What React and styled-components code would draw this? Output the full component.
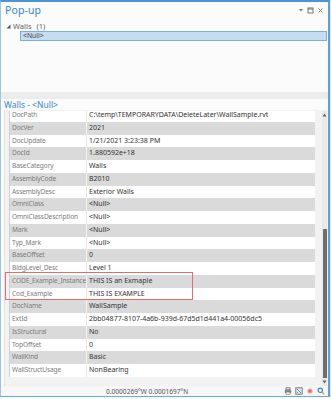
import React from "react";
import styled, { createGlobalStyle } from "styled-components";

const Global = createGlobalStyle`
  html, body { margin: 0; padding: 0; background: #fdfdfd; }
  body { font-family: "Noto Sans", "Open Sans", sans-serif; }
  * { box-sizing: border-box; }
`;

const Frame = styled.div`
  width: 331px;
  height: 399px;
  display: flex;
  align-items: flex-start;
  background: #fdfdfd;
  overflow: hidden;
`;

const Window = styled.div`
  width: 330px;
  height: 397px;
  display: flex;
  flex-direction: column;
  background: #fbfbfb;
  border-top: 2px solid #4a94d6;
  border-left: 1px solid #9cc4e8;
  border-right: 2px solid #5ca0dc;
  border-bottom: 1px solid #6aa8de;
`;

const SideStrip = styled.div`
  width: 1px;
  height: 397px;
  background: #e4e4e4;
`;

const TitleBar = styled.div`
  height: 16px;
  display: flex;
  align-items: center;
  justify-content: space-between;
  padding: 0 4px 0 4px;
`;

const Title = styled.div`
  font-size: 10.5px;
  line-height: 14px;
  color: #2f8ad0;
  letter-spacing: 0.1px;
`;

const WinIcons = styled.div`
  display: flex;
  gap: 3px;
  align-items: center;
  color: #777;
  font-size: 7px;
`;

const TreePanel = styled.div`
  height: 74px;
  padding: 3px 1px 0 5px;
  display: flex;
  flex-direction: column;
`;

const TreeRow = styled.div`
  height: 10px;
  display: flex;
  align-items: center;
  gap: 2px;
  font-size: 7.5px;
  color: #666;
`;

const Count = styled.span`
  margin-left: 3px;
`;

const SelectedRow = styled.div`
  margin-left: 14px;
  height: 10px;
  background: #c6ddf1;
  border: 1px solid #79b0e2;
  font-size: 6.8px;
  line-height: 8px;
  color: #444;
  padding-left: 2px;
`;

const Splitter = styled.div`
  height: 7px;
  background: #ececec;
`;

const FeatureHeader = styled.div`
  height: 11px;
  padding-left: 3px;
  font-size: 8.5px;
  line-height: 11px;
  color: #2f8ad0;
  background: #fbfbfb;
`;

const TableArea = styled.div`
  position: relative;
  flex: 1;
  display: flex;
  margin-left: 3px;
  padding: 1px 1px 0 4px;
  background: #f2f2f2;
  border-left: 1px solid #e2e2e2;
`;

const TableViewport = styled.div`
  width: 308px;
  height: 265.5px;
  overflow: hidden;
  border-left: 1px solid #cfcfcf;
`;

const Table = styled.div`
  margin-top: -2px;
  display: flex;
  flex-direction: column;
`;

const Row = styled.div`
  height: 12.75px;
  display: grid;
  grid-template-columns: 76px 1fr;
  background: ${(p) => (p.$alt ? "#dadada" : "#ffffff")};
  font-size: 7px;
  line-height: 12.75px;
  white-space: nowrap;
`;

const NameCell = styled.div`
  padding-left: 2px;
  color: #7b7b7b;
  font-size: 6.6px;
  letter-spacing: -0.12px;
`;

const ValueCell = styled.div`
  padding-left: 2px;
  color: #333;
  border-left: 1px solid ${(p) => (p.$alt ? "#f4f4f4" : "#e6e6e6")};
  overflow: hidden;
`;

const Scrollbar = styled.div`
  margin-left: 7px;
  width: 5px;
  height: 275px;
  background: #e9e9e9;
  display: flex;
  flex-direction: column;
  align-items: center;
`;

const Arrow = styled.div`
  height: 8px;
  display: flex;
  align-items: center;
  justify-content: center;
`;

const TrackSpace = styled.div`
  height: ${(p) => p.$h}px;
`;

const Thumb = styled.div`
  width: 4px;
  height: ${(p) => p.$h}px;
  background: #6e6e6e;
`;

const Highlight = styled.div`
  position: absolute;
  left: 0px;
  top: 162px;
  width: 188px;
  height: 28px;
  border: 1.3px solid #e36d6d;
  pointer-events: none;
`;

const StatusBar = styled.div`
  height: 10px;
  display: flex;
  align-items: center;
  padding-left: 105px;
  padding-right: 3px;
  background: #f7f7f7;
  font-size: 6.6px;
  color: #555;
`;

const Coords = styled.div`
  flex: 1;
`;

const StatusIcons = styled.div`
  display: flex;
  gap: 3px;
  align-items: center;
`;

const rows = [
  ["DocPath", "C:\\temp\\TEMPORARYDATA\\DeleteLater\\WallSample.rvt"],
  ["DocVer", "2021"],
  ["DocUpdate", "1/21/2021 3:23:38 PM"],
  ["DocId", "1.880592e+18"],
  ["BaseCategory", "Walls"],
  ["AssemblyCode", "B2010"],
  ["AssemblyDesc", "Exterior Walls"],
  ["OmniClass", "<Null>"],
  ["OmniClassDescription", "<Null>"],
  ["Mark", "<Null>"],
  ["Typ_Mark", "<Null>"],
  ["BaseOffset", "0"],
  ["BldgLevel_Desc", "Level 1"],
  ["CODE_Example_Instance", "THIS IS an Exmaple"],
  ["Cod_Example", "THIS IS EXAMPLE"],
  ["DocName", "WallSample"],
  ["ExtId", "2bb04877-8107-4a6b-939d-67d5d1d441a4-00056dc5"],
  ["IsStructural", "No"],
  ["TopOffset", "0"],
  ["WallKind", "Basic"],
  ["WallStructUsage", "NonBearing"],
];

export default function App() {
  return (
    <>
      <Global />
      <Frame>
        <Window>
          <TitleBar>
            <Title>Pop-up</Title>
            <WinIcons>
              <svg width="6" height="6" viewBox="0 0 6 6">
                <path d="M1 2 L5 2 L3 4.5 Z" fill="#777" />
              </svg>
              <svg width="7" height="7" viewBox="0 0 7 7">
                <rect x="1" y="1" width="5" height="5" fill="none" stroke="#777" strokeWidth="1" />
                <line x1="1" y1="2" x2="6" y2="2" stroke="#777" strokeWidth="1" />
              </svg>
              <svg width="7" height="7" viewBox="0 0 7 7">
                <path d="M1.5 1.5 L5.5 5.5 M5.5 1.5 L1.5 5.5" stroke="#777" strokeWidth="1" />
              </svg>
            </WinIcons>
          </TitleBar>
          <TreePanel>
            <TreeRow>
              <svg width="5" height="5" viewBox="0 0 5 5">
                <path d="M4.5 0.5 L4.5 4.5 L0.5 4.5 Z" fill="#555" />
              </svg>
              <span>Walls</span>
              <Count>(1)</Count>
            </TreeRow>
            <SelectedRow>&lt;Null&gt;</SelectedRow>
          </TreePanel>
          <Splitter />
          <FeatureHeader>Walls - &lt;Null&gt;</FeatureHeader>
          <TableArea>
            <TableViewport>
              <Table>
                {rows.map(([k, v], i) => (
                  <Row key={k} $alt={i % 2 === 1}>
                    <NameCell>{k}</NameCell>
                    <ValueCell $alt={i % 2 === 1}>{v}</ValueCell>
                  </Row>
                ))}
              </Table>
            </TableViewport>
            <Scrollbar>
              <Arrow>
                <svg width="5" height="4" viewBox="0 0 5 4">
                  <path d="M2.5 0.5 L4.5 3.5 L0.5 3.5 Z" fill="#666" />
                </svg>
              </Arrow>
              <TrackSpace $h={110} />
              <Thumb $h={149} />
              <Arrow>
                <svg width="5" height="4" viewBox="0 0 5 4">
                  <path d="M0.5 0.5 L4.5 0.5 L2.5 3.5 Z" fill="#666" />
                </svg>
              </Arrow>
            </Scrollbar>
            <Highlight />
          </TableArea>
          <StatusBar>
            <Coords>0.0000269°W 0.0001697°N</Coords>
            <StatusIcons>
              <svg width="8" height="8" viewBox="0 0 8 8">
                <rect x="2" y="0.8" width="4" height="2" fill="none" stroke="#666" strokeWidth="0.8" />
                <rect x="0.8" y="3" width="6.4" height="3" rx="0.6" fill="#888" />
                <rect x="2" y="5" width="4" height="2.2" fill="#fff" stroke="#666" strokeWidth="0.6" />
              </svg>
              <svg width="8" height="8" viewBox="0 0 8 8">
                <rect x="0.8" y="0.8" width="6.4" height="6.4" fill="#dde6ee" stroke="#666" strokeWidth="0.8" />
                <path d="M2 2 L4 4 M6 6 L4 4 M2 6 L3 5" stroke="#4a7fb0" strokeWidth="0.8" />
              </svg>
              <svg width="8" height="8" viewBox="0 0 8 8">
                <circle cx="4" cy="4" r="2.6" fill="#f29c9c" />
                <circle cx="4" cy="4" r="1.2" fill="#e85a5a" />
              </svg>
              <svg width="8" height="8" viewBox="0 0 8 8">
                <circle cx="3.3" cy="3.3" r="2.2" fill="none" stroke="#2f8ad0" strokeWidth="1.1" />
                <path d="M4.9 4.9 L7.2 7.2" stroke="#d9a040" strokeWidth="1.4" />
              </svg>
            </StatusIcons>
          </StatusBar>
        </Window>
        <SideStrip />
      </Frame>
    </>
  );
}
